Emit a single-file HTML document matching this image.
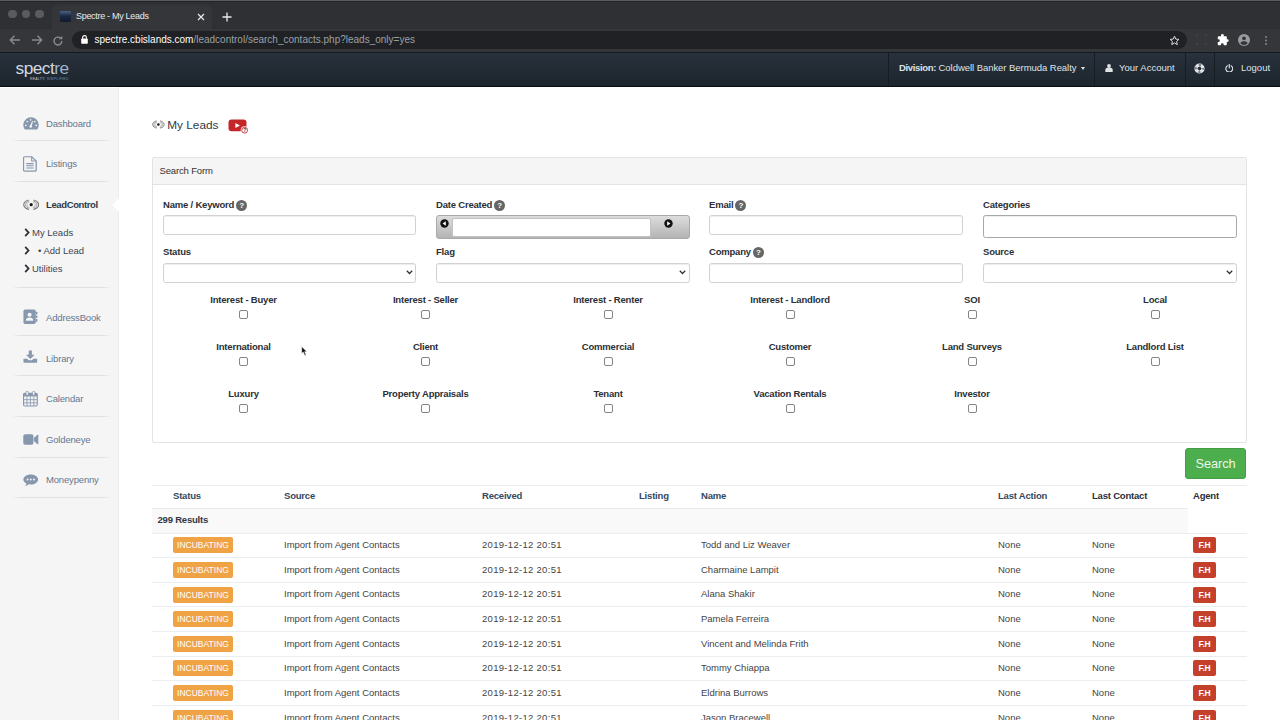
<!DOCTYPE html>
<html lang="en">
<head>
<meta charset="utf-8">
<title>Spectre - My Leads</title>
<style>
*{box-sizing:border-box;margin:0;padding:0}
html,body{width:1280px;height:720px;overflow:hidden;background:#fff}
body{font-family:"Liberation Sans",sans-serif;font-size:10px;color:#333b46;position:relative}
.abs{position:absolute}
/* browser chrome */
#tabbar{position:absolute;left:0;top:0;width:1280px;height:29px;background:#2f3033;border-top:1px solid #5a5c60;box-shadow:inset 0 1px 0 #232427}
#tab{position:absolute;left:52px;top:4px;width:160px;height:24px;background:#35363a;border-radius:6px 6px 0 0}
#tab .t{position:absolute;left:24px;top:6.400px;font-size:9px;color:#e8eaed;white-space:nowrap;letter-spacing:-0.300px}
#toolbar{position:absolute;left:0;top:29px;width:1280px;height:23px;background:#35363a}
#url{position:absolute;left:72px;top:2px;width:1115px;height:18px;border-radius:9px;background:#202124}
#url .u{position:absolute;left:22.500px;top:3px;font-size:10px;color:#9aa0a6;white-space:nowrap}
#url .u b{color:#fff;font-weight:normal}
.dot{position:absolute;top:8.800px;width:8.600px;height:8.600px;border-radius:50%;background:#5a5b5f}
.caret{display:inline-block;width:0;height:0;border:2.500px solid transparent;border-top:3px solid #dfe3e8;border-bottom:0;margin-left:5px;vertical-align:1.500px}
/* app header */
#hdr{position:absolute;left:0;top:52px;width:1280px;height:35px;background:linear-gradient(#28313c,#1d252d);border-bottom:1px solid #0a0d11;border-top:1px solid #15191e}
#hdr .item{position:absolute;top:-1px;height:34px;border-left:1px solid #161c22;color:#dfe3e8;font-size:9.5px;line-height:31.400px;white-space:nowrap}
/* sidebar */
#side{position:absolute;left:0;top:87px;width:119px;height:633px;background:linear-gradient(#fff 1.500px,#f5f5f5 1.500px);border-right:1px solid #ececec}
.nav{position:absolute;left:46px;font-size:9.5px;color:#66758f;white-space:nowrap;line-height:12px;letter-spacing:-0.170px}
.nav.act{color:#2f3846;font-weight:bold;letter-spacing:-0.380px}
.sep{position:absolute;left:12px;width:99px;height:1px;background:linear-gradient(90deg,rgba(224,224,224,0),#e0e0e0 8%,#e0e0e0 92%,rgba(224,224,224,0))}
.sub{position:absolute;left:32px;font-size:9.5px;color:#3d4653;white-space:nowrap;line-height:12px}
.ico{position:absolute;left:23px}
.tri{position:absolute;left:112px;top:110.500px;width:0;height:0;border:7.500px solid transparent;border-right:7px solid #fff;border-left:0}
.chev{position:absolute;left:-8.500px;top:1.200px}

/* main */
#title{position:absolute;left:167.300px;top:117.400px;font-size:11.800px;color:#2f3846;line-height:16px;white-space:nowrap}
#panel{position:absolute;left:152px;top:157px;width:1095px;height:286px;border:1px solid #e3e3e3;border-radius:2px;background:#fff}
#phead{position:absolute;left:0;top:0;width:1093px;height:27px;background:#f5f5f5;border-bottom:1px solid #e3e3e3;font-size:9.500px;color:#333;line-height:26px;padding-left:6.500px;letter-spacing:-0.150px}
.lbl{position:absolute;font-weight:bold;font-size:9.500px;color:#2b2f36;white-space:nowrap;line-height:12px;letter-spacing:-0.200px}
.q{display:inline-block;width:11px;height:11px;border-radius:50%;background:#666;color:#fff;font-size:8px;line-height:11px;text-align:center;margin-left:2px;vertical-align:-0.500px;font-weight:bold;letter-spacing:0}
.inp{position:absolute;height:20px;width:253.500px;border:1px solid #d2d2d2;border-radius:2.500px;background:#fff;box-shadow:inset 0 1px 1px rgba(0,0,0,.075)}
.cl{position:absolute;width:160px;text-align:center;font-weight:bold;font-size:9.500px;color:#2b2f36;line-height:12px;white-space:nowrap;letter-spacing:-0.200px}
.cb{position:absolute;width:9px;height:9px;border:1px solid #858585;border-radius:2px;background:#fff}
#btn{position:absolute;left:1185px;top:448px;width:61px;height:31px;border-radius:3px;background:#4cae4c;border:1px solid #449d44;color:#eef7ea;font-size:12.800px;line-height:29px;text-align:center;letter-spacing:-0.100px}
.th{position:absolute;top:489.500px;font-weight:bold;font-size:9.500px;line-height:12px;white-space:nowrap;color:#34495e;letter-spacing:-0.200px}
.th.k{color:#2b2f36}
.hl{position:absolute;left:152px;height:1px;background:#eaedf1}
.td{position:absolute;font-size:9.500px;line-height:12px;white-space:nowrap;color:#444}
.bi{position:absolute;left:173px;width:60px;height:16px;border-radius:2px;background:#f0a345;color:#fff;font-size:8.500px;line-height:16px;text-align:center}
.bf{position:absolute;left:1193px;width:23px;height:16px;border-radius:2px;background:#c5402b;color:#fff;font-size:8.500px;font-weight:bold;letter-spacing:-0.300px;line-height:16px;text-align:center}
</style>
</head>
<body>
<div id="tabbar">
  <div class="dot" style="left:8.300px"></div><div class="dot" style="left:21.500px"></div><div class="dot" style="left:35px"></div>
  <div id="tab">
    <div class="abs" style="left:8px;top:6px;width:11px;height:11px;background:linear-gradient(#4a6286,#1c2a44 45%,#101a2e);border-radius:1px"></div>
    <span class="t">Spectre - My Leads</span>
    <svg class="abs" style="left:145px;top:7.500px" width="8" height="8" viewBox="0 0 8 8"><path d="M1 1l6 6M7 1l-6 6" stroke="#e8eaed" stroke-width="1.200"/></svg>
  </div>
  <svg class="abs" style="left:221.600px;top:10.500px" width="10" height="10" viewBox="0 0 10 10"><path d="M5 0.500v9M0.500 5h9" stroke="#e8eaed" stroke-width="1.300"/></svg>
</div>
<div id="toolbar">
  <svg class="abs" style="left:9px;top:6px" width="12" height="10" viewBox="0 0 12 10"><path d="M5.500 0.800l-4.200 4.200 4.200 4.200M1.500 5h9.500" fill="none" stroke="#8a8b8f" stroke-width="1.400"/></svg>
  <svg class="abs" style="left:31px;top:6px" width="12" height="10" viewBox="0 0 12 10"><path d="M6.500 0.800l4.200 4.200-4.200 4.200M10.500 5h-9.500" fill="none" stroke="#8a8b8f" stroke-width="1.400"/></svg>
  <svg class="abs" style="left:52px;top:5.500px" width="12" height="12" viewBox="0 0 12 12"><path d="M9.800 6a3.900 3.900 0 1 1-1.200-2.800" fill="none" stroke="#8a8b8f" stroke-width="1.400"/><path d="M10.300 0.800v3.400h-3.400z" fill="#8a8b8f"/></svg>
  <div id="url">
    <svg class="abs" style="left:8.500px;top:4px" width="7" height="9" viewBox="0 0 7 9"><rect x="0.200" y="3.500" width="6.600" height="5.200" rx="0.800" fill="#fff"/><path d="M1.600 3.800v-1.300a1.900 1.900 0 0 1 3.800 0v1.300" fill="none" stroke="#fff" stroke-width="1.100"/></svg>
    <span class="u"><b>spectre.cbislands.com</b>/leadcontrol/search_contacts.php?leads_only=yes</span>
    <svg class="abs" style="left:1097px;top:4px" width="11" height="11" viewBox="0 0 11 11"><path d="M5.500 1.200l1.300 2.900 3.100 0.300-2.300 2.100 0.700 3.100-2.800-1.600-2.800 1.600 0.700-3.100-2.300-2.100 3.100-0.300z" fill="none" stroke="#dadce0" stroke-width="1"/></svg>
  </div>
  <svg class="abs" style="left:1216px;top:5px" width="13" height="13" viewBox="0 0 13 13"><path d="M5 1.500a1.400 1.400 0 0 1 2.800 0v0.700h2.200a0.800 0.800 0 0 1 0.800 0.800v2.200h0.500a1.400 1.400 0 0 1 0 2.800h-0.500v2.400a0.800 0.800 0 0 1-0.800 0.800h-2.300v-0.600a1.400 1.400 0 0 0-2.800 0v0.600h-2.300a0.800 0.800 0 0 1-0.800-0.800v-2.300h0.600a1.400 1.400 0 0 0 0-2.800h-0.600v-2.300a0.800 0.800 0 0 1 0.800-0.800h2.400z" fill="#fff"/></svg>
  <svg class="abs" style="left:1238px;top:5px" width="12" height="12" viewBox="0 0 12 12"><circle cx="6" cy="6" r="6" fill="#9a9ba0"/><circle cx="6" cy="4.300" r="1.900" fill="#35363a"/><path d="M2.200 9.300c0.600-1.500 2-2.100 3.800-2.100s3.200 0.600 3.800 2.100a5 5 0 0 1-7.600 0z" fill="#35363a"/></svg>
  <div class="abs" style="left:1265px;top:6.500px;width:2px;height:2px;border-radius:50%;background:#85868a;box-shadow:0 3.500px 0 #85868a,0 7px 0 #85868a"></div>
  <div class="abs" style="left:1196px;top:5px;width:2px;height:2px;background:#2f4a35;box-shadow:9px 0 0 #2f4a35,0 9px 0 #2f4a35,9px 9px 0 #2f4a35"></div>
</div>
<div id="hdr">
  <div class="abs" style="left:15.500px;top:4.800px;font-size:17.300px;line-height:20px;color:#d3d9e0;letter-spacing:-0.500px;white-space:nowrap">spect<span style="color:#9fb4cc">re</span></div>
  <div class="abs" style="left:30px;top:23.900px;font-size:3.400px;line-height:4px;color:#c9cfd6;letter-spacing:0.300px;white-space:nowrap">REALTY, <span style="color:#6f8fb5">SIMPLIFIED</span></div>
  <div class="item" style="left:888px;width:206px;padding-left:10px"><b style="letter-spacing:-0.350px">Division:</b><span style="letter-spacing:-0.050px"> Coldwell Banker Bermuda Realty</span><span class="caret"></span></div>
  <div class="item" style="left:1094px;width:91px;padding-left:24px"><svg class="abs" style="left:10px;top:12px" width="8" height="8" viewBox="0 0 8 8"><circle cx="4" cy="2" r="1.900" fill="#dfe3e8"/><path d="M0.300 8v-2c0-1.500 1-2.300 2-2.300h3.400c1 0 2 0.800 2 2.300v2z" fill="#dfe3e8"/></svg>Your Account</div>
  <div class="item" style="left:1184.500px;width:30px"><svg class="abs" style="left:8.500px;top:10.500px" width="11" height="11" viewBox="0 0 11 11"><circle cx="5.500" cy="5.500" r="3.450" fill="none" stroke="#e6e9ec" stroke-width="3.300"/><circle cx="5.500" cy="5.500" r="3.450" fill="none" stroke="#7d858f" stroke-width="3.300" stroke-dasharray="2.300 3.120" stroke-dashoffset="1.150"/></svg></div>
  <div class="item" style="left:1214px;width:66px;padding-left:26px"><svg class="abs" style="left:9.600px;top:11.700px" width="8.500" height="8.500" viewBox="0 0 9 9"><path d="M2.600 1.900a3.600 3.600 0 1 0 3.800 0" fill="none" stroke="#dfe3e8" stroke-width="1.200" stroke-linecap="round"/><path d="M4.500 0.500v3.600" stroke="#dfe3e8" stroke-width="1.200" stroke-linecap="round"/></svg>Logout</div>
</div>
<div id="side">
  <!-- y positions relative to sidebar top (87) -->
  <svg class="ico" style="top:30.300px;left:23px" width="16" height="12.500" viewBox="0 0 16 12.500"><path d="M8 0.300A7.700 7.700 0 0 0 0.300 8c0 1.400 0.400 2.800 1.100 3.900 0.200 0.300 0.500 0.500 0.900 0.500h11.400c0.400 0 0.700-0.200 0.900-0.500 0.700-1.100 1.100-2.500 1.100-3.900A7.700 7.700 0 0 0 8 0.300z" fill="#8797ad"/><g fill="#f5f5f5"><circle cx="2.800" cy="8.300" r="0.850"/><circle cx="4.300" cy="4.500" r="0.850"/><circle cx="7.600" cy="2.800" r="0.850"/><circle cx="11.700" cy="4.500" r="0.850"/><circle cx="13.200" cy="8.300" r="0.850"/><circle cx="7.700" cy="9.500" r="1.250"/><path d="M6.900 9.200l2.300-5.200 0.800 0.300-1.500 5.500z"/></g></svg>
  <div class="nav" style="top:31px">Dashboard</div>
  <div class="sep" style="top:53px"></div>
  <svg class="ico" style="top:69px;left:23px" width="14" height="15.800" viewBox="0 0 14 17" preserveAspectRatio="none"><path d="M1.700 0.800h7l4.500 4.500v9.700a1.200 1.200 0 0 1-1.200 1.200h-10.300a1.200 1.200 0 0 1-1.200-1.200v-13a1.200 1.200 0 0 1 1.200-1.200z" fill="none" stroke="#8797ad" stroke-width="1.300"/><path d="M8.700 0.800v4.500h4.500" fill="none" stroke="#8797ad" stroke-width="1.100"/><path d="M3.300 8.200h7.400M3.300 10.600h7.400M3.300 13h7.400" stroke="#8797ad" stroke-width="1.100"/></svg>
  <div class="nav" style="top:71.200px">Listings</div>
  <div class="sep" style="top:94px"></div>
  <svg class="ico" style="top:112px;left:22.800px" width="16.400" height="11.400" viewBox="0 0 16.400 11.400"><g fill="none"><ellipse cx="8.20" cy="5.70" rx="7.5" ry="5.0" stroke="#777" stroke-width="1.1"/><ellipse cx="8.20" cy="5.70" rx="5.8" ry="4.0" stroke="#a0a0a0" stroke-width="1.0"/><ellipse cx="8.20" cy="5.70" rx="4.2" ry="3.0" stroke="#b8b8b8" stroke-width="1.0"/></g><path d="M5.20 -1H11.20L8.80 5.70L11.20 12.4H5.20L7.60 5.70z" fill="#f5f5f5"/><circle cx="8.20" cy="5.70" r="1.6" fill="#1a1a1a"/></svg>
  <div class="nav act" style="top:112.300px">LeadControl</div>
  <div class="tri"></div>
  <div class="sub" style="top:140px"><svg class="chev" width="6" height="9" viewBox="0 0 6 9"><path d="M1.200 0.900l3.300 3.600-3.300 3.600" fill="none" stroke="#2b2f36" stroke-width="1.800"/></svg>My Leads</div>
  <div class="sub" style="top:157.800px"><svg class="chev" width="6" height="9" viewBox="0 0 6 9"><path d="M1.200 0.900l3.300 3.600-3.300 3.600" fill="none" stroke="#2b2f36" stroke-width="1.800"/></svg><span style="padding-left:6px">&#8226; Add Lead</span></div>
  <div class="sub" style="top:175.700px"><svg class="chev" width="6" height="9" viewBox="0 0 6 9"><path d="M1.200 0.900l3.300 3.600-3.300 3.600" fill="none" stroke="#2b2f36" stroke-width="1.800"/></svg>Utilities</div>
  <div class="sep" style="top:200px"></div>
  <svg class="ico" style="top:222.300px;left:23px" width="14.600" height="15.500" viewBox="0 0 16 17" preserveAspectRatio="none"><rect x="0.500" y="0.500" width="13.500" height="16" rx="2" fill="#8797ad"/><rect x="14" y="3" width="1.800" height="3" rx="0.500" fill="#8797ad"/><rect x="14" y="7" width="1.800" height="3" rx="0.500" fill="#8797ad"/><rect x="14" y="11" width="1.800" height="3" rx="0.500" fill="#8797ad"/><circle cx="7.200" cy="6.300" r="2.300" fill="#f5f5f5"/><path d="M3 13c0-2.500 1.800-3.700 4.200-3.700s4.200 1.200 4.200 3.700z" fill="#f5f5f5"/></svg>
  <div class="nav" style="top:224.700px">AddressBook</div>
  <div class="sep" style="top:248px"></div>
  <svg class="ico" style="top:263px;left:23px" width="14.600" height="13.200" viewBox="0 0 16 15" preserveAspectRatio="none"><path d="M6.300 0.500h3.400v5h3l-4.700 4.700-4.700-4.700h3z" fill="#8797ad"/><path d="M0.500 10h4l1.800 1.800h3.400l1.800-1.800h4v3.700a0.800 0.800 0 0 1-0.800 0.800h-13.400a0.800 0.800 0 0 1-0.800-0.800z" fill="#8797ad"/></svg>
  <div class="nav" style="top:265.500px">Library</div>
  <div class="sep" style="top:288px"></div>
  <svg class="ico" style="top:304px;left:23px" width="14.800" height="15.500" viewBox="0 0 16 17" preserveAspectRatio="none"><rect x="0.600" y="2.600" width="14.800" height="13.800" rx="1.300" fill="none" stroke="#8797ad" stroke-width="1.200"/><rect x="0.600" y="2.600" width="14.800" height="3.400" fill="#8797ad"/><path d="M0.600 9.500h14.800M0.600 13h14.800M4.300 6v10.400M8 6v10.400M11.700 6v10.400" stroke="#8797ad" stroke-width="0.900"/><rect x="3.200" y="0.300" width="2.600" height="4.400" rx="1.200" fill="#f5f5f5" stroke="#8797ad" stroke-width="0.900"/><rect x="10.200" y="0.300" width="2.600" height="4.400" rx="1.200" fill="#f5f5f5" stroke="#8797ad" stroke-width="0.900"/></svg>
  <div class="nav" style="top:306px">Calendar</div>
  <div class="sep" style="top:329px"></div>
  <svg class="ico" style="top:346.700px;left:23px" width="15.500" height="11" viewBox="0 0 16 11" preserveAspectRatio="none"><rect x="0.300" y="0.300" width="10.500" height="10.400" rx="2" fill="#8797ad"/><path d="M11.300 4l3.600-3.200c0.400-0.300 0.900 0 0.900 0.400v8.600c0 0.500-0.500 0.700-0.900 0.400l-3.600-3.200z" fill="#8797ad"/></svg>
  <div class="nav" style="top:347px">Goldeneye</div>
  <div class="sep" style="top:370px"></div>
  <svg class="ico" style="top:387px;left:23px" width="15.500" height="13.500" viewBox="0 0 16 15" preserveAspectRatio="none"><path d="M8 0.500c4.200 0 7.600 2.500 7.600 5.600s-3.400 5.600-7.600 5.600c-0.700 0-1.300-0.100-1.900-0.200-1 0.900-2.300 1.700-3.900 2 0.700-0.800 1.200-1.700 1.300-2.900-1.900-1-3.100-2.700-3.100-4.500 0-3.100 3.400-5.600 7.600-5.600z" fill="#8797ad"/><g fill="#f5f5f5"><circle cx="4.700" cy="6.100" r="1"/><circle cx="8" cy="6.100" r="1"/><circle cx="11.300" cy="6.100" r="1"/></g></svg>
  <div class="nav" style="top:387px">Moneypenny</div>
  <div class="sep" style="top:410px"></div>
</div>
<div id="main">
<svg class="abs" style="left:151.800px;top:119.600px" width="12.800" height="9" viewBox="0 0 12.800 9"><g fill="none"><ellipse cx="6.40" cy="4.50" rx="5.78" ry="3.85" stroke="#777" stroke-width="0.9"/><ellipse cx="6.40" cy="4.50" rx="4.47" ry="3.08" stroke="#a0a0a0" stroke-width="0.9"/><ellipse cx="6.40" cy="4.50" rx="3.23" ry="2.31" stroke="#b8b8b8" stroke-width="0.9"/></g><path d="M4.10 -1H8.70L7.00 4.50L8.70 10H4.10L5.80 4.50z" fill="#fff"/><circle cx="6.40" cy="4.50" r="1.25" fill="#111"/></svg>
<div id="title">My Leads</div>
<svg class="abs" style="left:228px;top:119px" width="21" height="16" viewBox="0 0 21 16"><rect x="0.500" y="0.600" width="18" height="11.700" rx="3" fill="#c4262a"/><path d="M7.400 4.100l4.500 2.400-4.500 2.400z" fill="#fff"/><circle cx="16.600" cy="11.200" r="3.900" fill="#fff"/><circle cx="16.600" cy="11.200" r="2.900" fill="#fff" stroke="#c4262a" stroke-width="0.900"/><text x="16.600" y="12.900" font-size="4.600" font-weight="bold" fill="#222" text-anchor="middle" font-family="Liberation Sans, sans-serif">?</text></svg>
<div id="panel"><div id="phead">Search Form</div></div>
<div class="lbl" style="left:163px;top:198.500px">Name / Keyword<span class="q">?</span></div>
<div class="lbl" style="left:436px;top:198.500px">Date Created<span class="q">?</span></div>
<div class="lbl" style="left:709px;top:198.500px">Email<span class="q">?</span></div>
<div class="lbl" style="left:983px;top:198.500px">Categories</div>
<div class="lbl" style="left:163px;top:245.700px">Status</div>
<div class="lbl" style="left:436px;top:245.700px">Flag</div>
<div class="lbl" style="left:709px;top:245.700px">Company<span class="q">?</span></div>
<div class="lbl" style="left:983px;top:245.700px">Source</div>
<div class="inp" style="left:162.500px;top:215px"></div>
<div class="abs" style="left:436px;top:215px;width:253.500px;height:23.500px;border:1px solid #a9a9a9;border-radius:3px;background:linear-gradient(#dcdcdc,#b4b4b4)"><div class="abs" style="left:15px;top:2px;width:199px;height:18.500px;background:#fff;border:1px solid #c2c2c2;border-radius:2px"></div><svg class="abs" style="left:3px;top:2.800px" width="9" height="9" viewBox="0 0 9 9"><circle cx="4.500" cy="4.500" r="4.200" fill="#111"/><path d="M5.800 2.300v4.400l-3.200-2.200z" fill="#fff"/></svg><svg class="abs" style="left:226.500px;top:2.800px" width="9" height="9" viewBox="0 0 9 9"><circle cx="4.500" cy="4.500" r="4.200" fill="#111"/><path d="M3.200 2.300v4.400l3.200-2.200z" fill="#fff"/></svg></div>
<div class="inp" style="left:709px;top:215px"></div>
<div class="inp" style="left:982.500px;top:215px;height:22.500px;border-color:#a8a8a8;width:254px"></div>
<div class="inp sel" style="left:162.500px;top:262.500px"><svg class="abs" style="right:2.200px;top:6.300px" width="7" height="5" viewBox="0 0 7 5"><path d="M0.800 0.800l2.700 2.700 2.700-2.700" fill="none" stroke="#333" stroke-width="1.300"/></svg></div>
<div class="inp sel" style="left:436px;top:262.500px"><svg class="abs" style="right:2.200px;top:6.300px" width="7" height="5" viewBox="0 0 7 5"><path d="M0.800 0.800l2.700 2.700 2.700-2.700" fill="none" stroke="#333" stroke-width="1.300"/></svg></div>
<div class="inp" style="left:709px;top:262.500px"></div>
<div class="inp sel" style="left:983px;top:262.500px"><svg class="abs" style="right:2.200px;top:6.300px" width="7" height="5" viewBox="0 0 7 5"><path d="M0.800 0.800l2.700 2.700 2.700-2.700" fill="none" stroke="#333" stroke-width="1.300"/></svg></div>
<div class="cl" style="left:163.5px;top:294.0px">Interest - Buyer</div><div class="cb" style="left:239.0px;top:310.3px"></div>
<div class="cl" style="left:345.5px;top:294.0px">Interest - Seller</div><div class="cb" style="left:421.0px;top:310.3px"></div>
<div class="cl" style="left:528.0px;top:294.0px">Interest - Renter</div><div class="cb" style="left:603.5px;top:310.3px"></div>
<div class="cl" style="left:710.0px;top:294.0px">Interest - Landlord</div><div class="cb" style="left:785.5px;top:310.3px"></div>
<div class="cl" style="left:892.0px;top:294.0px">SOI</div><div class="cb" style="left:967.5px;top:310.3px"></div>
<div class="cl" style="left:1075.0px;top:294.0px">Local</div><div class="cb" style="left:1150.5px;top:310.3px"></div>
<div class="cl" style="left:163.5px;top:341.1px">International</div><div class="cb" style="left:239.0px;top:357.2px"></div>
<div class="cl" style="left:345.5px;top:341.1px">Client</div><div class="cb" style="left:421.0px;top:357.2px"></div>
<div class="cl" style="left:528.0px;top:341.1px">Commercial</div><div class="cb" style="left:603.5px;top:357.2px"></div>
<div class="cl" style="left:710.0px;top:341.1px">Customer</div><div class="cb" style="left:785.5px;top:357.2px"></div>
<div class="cl" style="left:892.0px;top:341.1px">Land Surveys</div><div class="cb" style="left:967.5px;top:357.2px"></div>
<div class="cl" style="left:1075.0px;top:341.1px">Landlord List</div><div class="cb" style="left:1150.5px;top:357.2px"></div>
<div class="cl" style="left:163.5px;top:388.2px">Luxury</div><div class="cb" style="left:239.0px;top:404.4px"></div>
<div class="cl" style="left:345.5px;top:388.2px">Property Appraisals</div><div class="cb" style="left:421.0px;top:404.4px"></div>
<div class="cl" style="left:528.0px;top:388.2px">Tenant</div><div class="cb" style="left:603.5px;top:404.4px"></div>
<div class="cl" style="left:710.0px;top:388.2px">Vacation Rentals</div><div class="cb" style="left:785.5px;top:404.4px"></div>
<div class="cl" style="left:892.0px;top:388.2px">Investor</div><div class="cb" style="left:967.5px;top:404.4px"></div>
<div id="btn">Search</div>
<div class="hl" style="top:485px;width:1095px"></div>
<div class="th" style="left:173px">Status</div>
<div class="th" style="left:284px">Source</div>
<div class="th" style="left:482px">Received</div>
<div class="th" style="left:639px">Listing</div>
<div class="th" style="left:701px">Name</div>
<div class="th" style="left:998px">Last Action</div>
<div class="th k" style="left:1092px">Last Contact</div>
<div class="th k" style="left:1193px">Agent</div>
<div class="abs" style="left:152px;top:508px;width:1036px;height:25px;background:#f9f9f9;border-top:1px solid #e8ecf0"></div>
<div class="lbl" style="left:157.500px;top:514px;color:#2f3846">299 Results</div>
<div class="hl" style="top:532.6px;width:1095px"></div>
<div class="bi" style="top:537.4px">INCUBATING</div>
<div class="td" style="left:284px;top:538.6px">Import from Agent Contacts</div>
<div class="td" style="left:482px;top:538.6px;letter-spacing:0.300px">2019-12-12 20:51</div>
<div class="td" style="left:701px;top:538.6px">Todd and Liz Weaver</div>
<div class="td" style="left:998px;top:538.6px">None</div>
<div class="td" style="left:1092px;top:538.6px">None</div>
<div class="bf" style="top:537.4px">F.H</div>
<div class="hl" style="top:557.2px;width:1095px"></div>
<div class="bi" style="top:562.0px">INCUBATING</div>
<div class="td" style="left:284px;top:563.6px">Import from Agent Contacts</div>
<div class="td" style="left:482px;top:563.6px;letter-spacing:0.300px">2019-12-12 20:51</div>
<div class="td" style="left:701px;top:563.6px">Charmaine Lampit</div>
<div class="td" style="left:998px;top:563.6px">None</div>
<div class="td" style="left:1092px;top:563.6px">None</div>
<div class="bf" style="top:562.0px">F.H</div>
<div class="hl" style="top:581.8px;width:1095px"></div>
<div class="bi" style="top:586.6px">INCUBATING</div>
<div class="td" style="left:284px;top:587.6px">Import from Agent Contacts</div>
<div class="td" style="left:482px;top:587.6px;letter-spacing:0.300px">2019-12-12 20:51</div>
<div class="td" style="left:701px;top:587.6px">Alana Shakir</div>
<div class="td" style="left:998px;top:587.6px">None</div>
<div class="td" style="left:1092px;top:587.6px">None</div>
<div class="bf" style="top:586.6px">F.H</div>
<div class="hl" style="top:606.4px;width:1095px"></div>
<div class="bi" style="top:611.2px">INCUBATING</div>
<div class="td" style="left:284px;top:612.6px">Import from Agent Contacts</div>
<div class="td" style="left:482px;top:612.6px;letter-spacing:0.300px">2019-12-12 20:51</div>
<div class="td" style="left:701px;top:612.6px">Pamela Ferreira</div>
<div class="td" style="left:998px;top:612.6px">None</div>
<div class="td" style="left:1092px;top:612.6px">None</div>
<div class="bf" style="top:611.2px">F.H</div>
<div class="hl" style="top:631.0px;width:1095px"></div>
<div class="bi" style="top:635.8px">INCUBATING</div>
<div class="td" style="left:284px;top:637.6px">Import from Agent Contacts</div>
<div class="td" style="left:482px;top:637.6px;letter-spacing:0.300px">2019-12-12 20:51</div>
<div class="td" style="left:701px;top:637.6px">Vincent and Melinda Frith</div>
<div class="td" style="left:998px;top:637.6px">None</div>
<div class="td" style="left:1092px;top:637.6px">None</div>
<div class="bf" style="top:635.8px">F.H</div>
<div class="hl" style="top:655.6px;width:1095px"></div>
<div class="bi" style="top:660.4px">INCUBATING</div>
<div class="td" style="left:284px;top:661.6px">Import from Agent Contacts</div>
<div class="td" style="left:482px;top:661.6px;letter-spacing:0.300px">2019-12-12 20:51</div>
<div class="td" style="left:701px;top:661.6px">Tommy Chiappa</div>
<div class="td" style="left:998px;top:661.6px">None</div>
<div class="td" style="left:1092px;top:661.6px">None</div>
<div class="bf" style="top:660.4px">F.H</div>
<div class="hl" style="top:680.2px;width:1095px"></div>
<div class="bi" style="top:685.0px">INCUBATING</div>
<div class="td" style="left:284px;top:686.6px">Import from Agent Contacts</div>
<div class="td" style="left:482px;top:686.6px;letter-spacing:0.300px">2019-12-12 20:51</div>
<div class="td" style="left:701px;top:686.6px">Eldrina Burrows</div>
<div class="td" style="left:998px;top:686.6px">None</div>
<div class="td" style="left:1092px;top:686.6px">None</div>
<div class="bf" style="top:685.0px">F.H</div>
<div class="hl" style="top:704.8px;width:1095px"></div>
<div class="bi" style="top:709.6px">INCUBATING</div>
<div class="td" style="left:284px;top:711.6px">Import from Agent Contacts</div>
<div class="td" style="left:482px;top:711.6px;letter-spacing:0.300px">2019-12-12 20:51</div>
<div class="td" style="left:701px;top:711.6px">Jason Bracewell</div>
<div class="td" style="left:998px;top:711.6px">None</div>
<div class="td" style="left:1092px;top:711.6px">None</div>
<div class="bf" style="top:709.6px">F.H</div>
<svg class="abs" style="left:300.500px;top:346.400px" width="8" height="11" viewBox="0 0 8 11"><path d="M0.700 0.600v6.900l1.600-1.400 1.500 3.500 1.300-0.600-1.500-3.300h2.300z" fill="#111" stroke="#fff" stroke-width="0.500"/></svg>
</div>
</body>
</html>
